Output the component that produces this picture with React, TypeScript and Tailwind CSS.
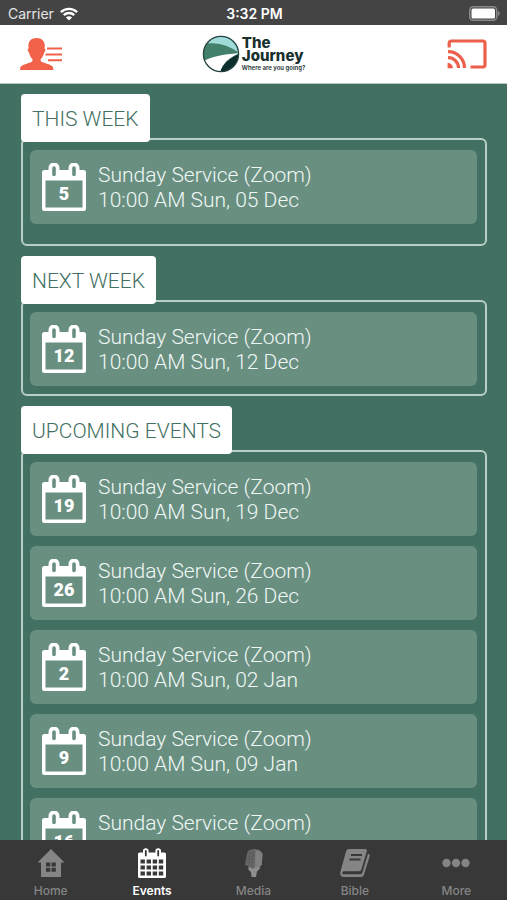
type CalendarEvent = {
  day: number
  title: string
  time: string
}

type Section = {
  label: string
  roomy?: boolean
  events: CalendarEvent[]
}

const sections: Section[] = [
  {
    label: "THIS WEEK",
    roomy: true,
    events: [{ day: 5, title: "Sunday Service (Zoom)", time: "10:00 AM Sun, 05 Dec" }],
  },
  {
    label: "NEXT WEEK",
    events: [{ day: 12, title: "Sunday Service (Zoom)", time: "10:00 AM Sun, 12 Dec" }],
  },
  {
    label: "UPCOMING EVENTS",
    events: [
      { day: 19, title: "Sunday Service (Zoom)", time: "10:00 AM Sun, 19 Dec" },
      { day: 26, title: "Sunday Service (Zoom)", time: "10:00 AM Sun, 26 Dec" },
      { day: 2, title: "Sunday Service (Zoom)", time: "10:00 AM Sun, 02 Jan" },
      { day: 9, title: "Sunday Service (Zoom)", time: "10:00 AM Sun, 09 Jan" },
      { day: 16, title: "Sunday Service (Zoom)", time: "10:00 AM Sun, 16 Jan" },
    ],
  },
]

// Icons
function WifiIcon() {
  return (
    <svg viewBox="0 0 18 14" className="h-[14px] w-[18px]" fill="none" stroke="white" strokeWidth="2.4">
      <path d="M0.9 5.2a11.5 11.5 0 0 1 16.2 0" />
      <path d="M3.8 8.2a7.4 7.4 0 0 1 10.4 0" />
      <path d="M9 13.6 5.9 10.5a4.4 4.4 0 0 1 6.2 0Z" fill="white" stroke="none" />
    </svg>
  )
}

function BatteryIcon() {
  return (
    <svg viewBox="0 0 32 15" className="h-[15px] w-8">
      <rect x="0.75" y="0.75" width="27" height="13.5" rx="3.5" fill="none" stroke="#8a8a8a" strokeWidth="1.5" />
      <rect x="2.5" y="2.5" width="23.5" height="10" rx="1.5" fill="white" />
      <path d="M29 5v5c1-.5 1.700-1.500 1.700-2.500S30 5.500 29 5Z" fill="#8a8a8a" />
    </svg>
  )
}

function ProfileIcon() {
  return (
    <svg viewBox="0 0 42 32" className="h-8 w-[42px]" fill="#f2624b">
      <path d="M16.500 0c5.300 0 8.500 3.200 8.300 8.200l-.2 2.300c1.300.2 1.200 2.500-.6 4.600-.5 3-1.700 4.600-3.300 6v2c1 2 11 3 12.300 6.200l.4 2.700H0l.4-2.700C1.700 26.100 11.500 25.100 12.500 23v-2c-1.600-1.400-2.800-3-3.300-6-1.700-2-1.900-4.400-.6-4.600L8.400 8.200C8.200 3.200 11.200 0 16.500 0Z" />
      <path d="M27 9.500h15v2H27zM25.500 15.500h16.500v2H25.500zM28 21.300h14v2H28z" />
    </svg>
  )
}

function CastIcon() {
  return (
    <svg viewBox="0 0 40 30" className="h-[30px] w-10" fill="none" stroke="#ec5f4a" strokeWidth="3.200">
      <path d="M2.200 8.500V4.200c0-1.400.8-2.200 2.200-2.200h31.400c1.400 0 2.200.8 2.200 2.200v21.600c0 1.400-.8 2.200-2.200 2.200H23.500" />
      <path d="M1 12.700A16.300 16.300 0 0 1 17.500 29M1 18.700A10.300 10.300 0 0 1 11.500 29" />
      <path d="M.6 23.800A5.400 5.400 0 0 1 6 29.200H.6Z" fill="#ec5f4a" stroke="none" />
    </svg>
  )
}

function JourneyMark() {
  return (
    <svg viewBox="0 0 38 38" className="size-[38px]">
      <clipPath id="mark">
        <circle cx="19" cy="19" r="17.500" />
      </clipPath>
      <g clipPath="url(#mark)">
        <rect width="38" height="38" fill="#43806b" />
        <path d="M0 0h38v18.500C28 11 17 7 5 8.500Z" fill="#9fdbd8" />
        <path d="M0 27.500C9 21 20 20 38 18 27 22 20 29 18 38H0Z" fill="white" />
        <path d="M38 18.500C27 23 20 29 18 38h20Z" fill="#0d2f2d" />
      </g>
      <circle cx="19" cy="19" r="17.600" fill="none" stroke="#24423f" strokeWidth="1.300" />
    </svg>
  )
}

function DayIcon({ day }: { day: number }) {
  return (
    <div className="grid h-12 w-11 shrink-0">
      <svg viewBox="0 0 44 48" className="col-start-1 row-start-1 h-12 w-11">
        <path
          fill="white"
          fillRule="evenodd"
          d="M2.500 7H6.500V5a5.500 5.500 0 0 1 11 0v2h9V5a5.500 5.500 0 0 1 11 0v2h4A2.500 2.500 0 0 1 44 9.500v36a2.500 2.500 0 0 1-2.500 2.500h-39A2.500 2.500 0 0 1 0 45.500v-36A2.500 2.500 0 0 1 2.500 7ZM3.500 17.500v27h37v-27ZM10.200 5v6.500a1.800 1.800 0 0 0 3.600 0V5a1.800 1.800 0 0 0-3.600 0ZM30.200 5v6.500a1.800 1.800 0 0 0 3.600 0V5a1.800 1.800 0 0 0-3.600 0Z"
        />
      </svg>
      <span className="col-start-1 row-start-1 pt-[21px] text-center font-['Roboto',sans-serif] text-lg leading-5 font-black">
        {day}
      </span>
    </div>
  )
}

function HomeIcon() {
  return (
    <svg viewBox="0 0 28 30" className="h-[30px] w-7">
      <path fill="currentColor" fillRule="evenodd" d="M14 1 27.500 14.500H24V29H4V14.500H.5ZM9 14.500v4h4.300v-4Zm5.500 0v4h4.300v-4ZM9 19.700v4h4.300v-4Zm5.500 0v4h4.300v-4Z" />
    </svg>
  )
}

function EventsIcon() {
  return (
    <svg viewBox="0 0 28 30" className="h-[30px] w-7">
      <path
        fill="currentColor"
        fillRule="evenodd"
        d="M1.500 4.500H5V3a2.800 2.800 0 0 1 5.600 0v1.500h6.800V3A2.800 2.800 0 0 1 23 3v1.500h3.500A1.500 1.500 0 0 1 28 6v22.500a1.500 1.500 0 0 1-1.500 1.500h-25A1.500 1.500 0 0 1 0 28.500V6a1.500 1.500 0 0 1 1.500-1.500ZM6.900 3v4.500a.9.9 0 0 0 1.800 0V3a.9.9 0 0 0-1.800 0ZM19.300 3v4.500a.9.9 0 0 0 1.800 0V3a.9.9 0 0 0-1.800 0Z"
      />
      <path
        fill="#383838"
        d="M2.500 11.500h4.400v4H2.500zM8.600 11.500H13v4H8.600zM14.700 11.500h4.400v4h-4.400zM20.800 11.500h4.400v4h-4.400zM2.500 17.500h4.400v4H2.500zM8.600 17.500H13v4H8.600zM14.700 17.500h4.400v4h-4.400zM20.800 17.500h4.400v4h-4.400zM2.500 23.500h4.400v4H2.500zM8.600 23.500H13v4H8.600zM14.700 23.500h4.400v4h-4.400zM20.800 23.500h4.400v4h-4.400z"
      />
    </svg>
  )
}

function MediaIcon() {
  return (
    <svg viewBox="0 0 28 30" className="h-[30px] w-7">
      <path fill="#686868" d="M8.500 4C10 1.500 13 .8 16 1l4 .8 3.500 3.200-.7 12-3.300 4-7.500-1-6-3.500Z" />
      <path fill="#808080" d="m16.500 2.500 4 .2L23.500 6l-.8 10.500-3.700 4-3-.5Z" />
      <path stroke="#585858" strokeWidth="0.8" fill="none" d="m9 6 7-1.500M8.500 9l7.500-1.500M8 12l8-1.500M7.500 15l8-1.500M11 2.500 9.500 17.500M14 1.500l-1.500 18" />
      <path fill="#8d8d8d" d="m9.500 18.500 4 2 5.500-1.500 2.500 1-3.500 3.500-1 5.500h-4.500l-.5-5-2.500-2Z" />
    </svg>
  )
}

function BibleIcon() {
  return (
    <svg viewBox="0 0 30 30" className="h-[30px] w-[30px]">
      <path fill="currentColor" d="M9 1h16c1.500 0 2.200 1 1.800 2.300l-5.300 18c-.4 1.300-1.300 2-2.700 2H4c-2 0-2.500 3 0 3h16c1.200 0 2-.6 2.400-1.800L28 5.700c1.600.4 2 1.300 1.600 2.800l-5.600 18c-.5 1.700-1.700 2.500-3.300 2.500H4c-3.200 0-4.500-2.500-3.500-5.500L6 3.500C6.500 1.800 7.500 1 9 1Z" />
      <path stroke="#383838" strokeWidth="1.800" d="M11 7h11M9.500 11.500h11" />
    </svg>
  )
}

function MoreIcon() {
  return (
    <svg viewBox="0 0 28 30" className="h-[30px] w-7" fill="currentColor">
      <circle cx="4.500" cy="15" r="4.200" />
      <circle cx="14" cy="15" r="4.200" />
      <circle cx="23.500" cy="15" r="4.200" />
    </svg>
  )
}

const tabs = [
  { label: "Home", icon: HomeIcon },
  { label: "Events", icon: EventsIcon, active: true },
  { label: "Media", icon: MediaIcon },
  { label: "Bible", icon: BibleIcon },
  { label: "More", icon: MoreIcon },
]

// Status Bar Component
function StatusBar() {
  return (
    <div className="grid h-[25px] shrink-0 grid-cols-3 items-center bg-[#444444] pt-0.5 pr-1.5 pl-2 text-sm text-white">
      <div className="flex items-center gap-1.5">
        <span className="text-[#e4e4e4]">Carrier</span>
        <WifiIcon />
      </div>
      <span className="text-center font-semibold">3:32 PM</span>
      <div className="flex justify-end">
        <BatteryIcon />
      </div>
    </div>
  )
}

// Header Component
function Header() {
  return (
    <header className="grid h-[59px] shrink-0 grid-cols-3 items-center border-b border-[#b7c9c1] bg-white px-5">
      <button type="button" aria-label="Profile" className="justify-self-start">
        <ProfileIcon />
      </button>
      <div className="flex items-center justify-center gap-0.5">
        <JourneyMark />
        <div className="text-[#17302e]">
          <div className="text-[15px] leading-[13px] font-extrabold">The</div>
          <div className="text-[15px] leading-[13px] font-extrabold">Journey</div>
          <div className="mt-0.5 text-[6px] leading-2 font-semibold whitespace-nowrap">Where are you going?</div>
        </div>
      </div>
      <button type="button" aria-label="Cast" className="justify-self-end">
        <CastIcon />
      </button>
    </header>
  )
}

// Event Section Component
function EventSection({ label, roomy, events }: Section) {
  return (
    <section>
      <h2 className="relative -mb-1 h-12 w-fit rounded bg-white px-[11px] pt-px font-['Roboto',sans-serif] text-[21px] leading-12 font-light whitespace-nowrap text-[#427062]">
        {label}
      </h2>
      <ul
        className={`flex flex-col gap-2.5 rounded-md border-2 border-[#b9cec6] pt-2.5 pr-2 pl-[7px] ${roomy ? "pb-5" : "pb-2"}`}
      >
        {events.map((event) => (
          <li key={event.time}>
            <a href="#" className="flex h-[74px] items-center gap-3 rounded-md bg-[#698f81] px-3 text-white">
              <DayIcon day={event.day} />
              <div className="pt-0.5 font-['Roboto',sans-serif] text-[21px] leading-[25px] font-light whitespace-nowrap text-[#f0f8f5]">
                <div>{event.title}</div>
                <div>{event.time}</div>
              </div>
            </a>
          </li>
        ))}
      </ul>
    </section>
  )
}

// Tab Bar Component
function TabBar() {
  return (
    <nav className="grid h-[60px] shrink-0 grid-cols-5 bg-[#383838]">
      {tabs.map((tab) => (
        <a
          key={tab.label}
          href="#"
          className={`flex flex-col items-center gap-[5px] pt-2 ${tab.active ? "font-semibold text-white" : "font-medium text-[#858585]"}`}
        >
          <tab.icon />
          <span className="text-xs leading-4">{tab.label}</span>
        </a>
      ))}
    </nav>
  )
}

export default function App() {
  return (
    <div className="flex h-screen flex-col bg-[#427062] font-['Inter',sans-serif]">
      <StatusBar />
      <Header />
      <main className="flex min-h-0 flex-1 flex-col gap-2.5 overflow-hidden pt-2.5 pr-5 pl-[21px]">
        {sections.map((section) => (
          <EventSection key={section.label} {...section} />
        ))}
      </main>
      <TabBar />
    </div>
  )
}
